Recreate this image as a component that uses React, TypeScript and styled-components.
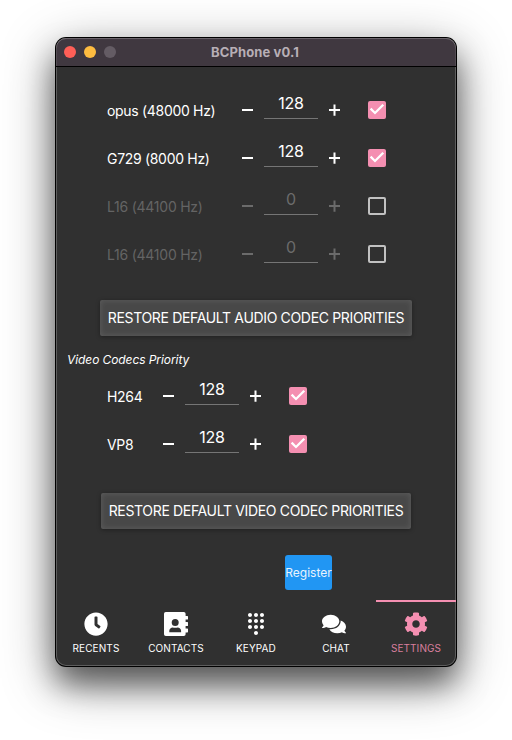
import React from "react";
import styled, { createGlobalStyle } from "styled-components";
import { FaClock, FaCog, FaComments } from "react-icons/fa";
import { MdDialpad } from "react-icons/md";

const PINK = "#f48fb1";

const GlobalStyle = createGlobalStyle`
  * { box-sizing: border-box; }
  html, body { margin: 0; background: #fff; }
  body { font-family: Inter, "Liberation Sans", sans-serif; color: #fff; }
  button { font-family: inherit; color: inherit; border: 0; margin: 0; padding: 0; background: none; }
`;

const Desktop = styled.div`
  width: 512px;
  height: 740px;
  padding: 38px 56px 0;
  overflow: hidden;
`;

const Window = styled.main`
  width: 400px;
  height: 628px;
  display: flex;
  flex-direction: column;
  background: #303030;
  border-radius: 10px;
  box-shadow:
    inset 0 0 0 1px rgba(255, 255, 255, 0.22),
    0 0 0 1px #000,
    0 18px 30px rgba(0, 0, 0, 0.5),
    0 14px 54px rgba(0, 0, 0, 0.42);
`;

const TitleBar = styled.header`
  height: 29px;
  display: grid;
  grid-template-columns: 60px 1fr 70px;
  align-items: center;
  padding-left: 8px;
  background: #403840;
  border-bottom: 1px solid #000;
  border-radius: 10px 10px 0 0;
  box-shadow: inset 0 1px 0 rgba(255, 255, 255, 0.22), inset 1px 0 0 rgba(255, 255, 255, 0.1), inset -1px 0 0 rgba(255, 255, 255, 0.1);
`;

const Lights = styled.div`
  display: flex;
  gap: 8px;
`;

const Light = styled.span<{ $color: string }>`
  width: 12px;
  height: 12px;
  border-radius: 50%;
  background: ${(p) => p.$color};
`;

const Title = styled.h1`
  margin: 0;
  text-align: center;
  font-size: 13px;
  line-height: 16px;
  font-weight: 700;
  color: #b8afb6;
  letter-spacing: 0.13px;
  padding-bottom: 1px;
`;

const Content = styled.section`
  height: 533px;
  display: flex;
  flex-direction: column;
  padding-top: 19px;
`;

const CodecRow = styled.div<{ $labelWidth: number }>`
  height: 48px;
  display: grid;
  grid-template-columns: ${(p) => p.$labelWidth}px 11px 54px 11px 18px;
  column-gap: 11px;
  align-items: center;
  padding-left: 51px;
`;

const CodecName = styled.span<{ $dim: boolean }>`
  font-size: 14px;
  line-height: 18px;
  padding-top: 1px;
  letter-spacing: ${(p) => (p.$dim ? "-0.24px" : "-0.31px")};
  white-space: nowrap;
  color: ${(p) => (p.$dim ? "#646464" : "#fff")};
`;

const StepButton = styled.button<{ $dim: boolean }>`
  width: 11px;
  height: 12px;
  display: block;
  color: ${(p) => (p.$dim ? "#6b6b6b" : "#fff")};
  svg { display: block; }
`;

const Field = styled.div<{ $dim: boolean }>`
  height: 28px;
  align-self: start;
  margin-top: 5px;
  border-bottom: 1px solid #757575;
  text-align: center;
  font-size: 16px;
  line-height: 24px;
  letter-spacing: -0.15px;
  color: ${(p) => (p.$dim ? "#6b6b6b" : "#fff")};
`;

const Check = styled.button<{ $on: boolean }>`
  width: 18px;
  height: 18px;
  margin-left: 17px;
  border-radius: 2px;
  border: ${(p) => (p.$on ? "0" : "2px solid #c1c1c1")};
  background: ${(p) => (p.$on ? PINK : "transparent")};
  svg { display: block; }
`;

const Restore = styled.button<{ $width: number; $top: number }>`
  width: ${(p) => p.$width}px;
  height: 36px;
  flex: none;
  align-self: center;
  margin-top: ${(p) => p.$top}px;
  padding-bottom: 1px;
  border-radius: 2px;
  background: #484848;
  box-shadow: inset 0 0 6px rgba(255, 255, 255, 0.12), 0 1px 4px rgba(0, 0, 0, 0.35);
  font-size: 14px;
  letter-spacing: -0.34px;
  white-space: nowrap;
`;

const SectionLabel = styled.h2`
  margin: 15px 0 4px 11px;
  font-size: 12px;
  line-height: 17px;
  font-weight: 400;
  font-style: italic;
  letter-spacing: -0.08px;
`;

const Register = styled.button`
  width: 47px;
  height: 35px;
  flex: none;
  margin: 26px 0 0 229px;
  border-radius: 3px;
  background: #2196f3;
  font-size: 12px;
  letter-spacing: -0.02px;
  color: #e8f3fd;
`;

const TabBar = styled.nav`
  height: 66px;
  display: grid;
  grid-template-columns: repeat(5, 80px);
`;

const Tab = styled.button<{ $active: boolean }>`
  display: flex;
  flex-direction: column;
  align-items: center;
  padding-top: 10px;
  border-top: 2px solid ${(p) => (p.$active ? PINK : "transparent")};
  color: ${(p) => (p.$active ? PINK : "#fff")};
  svg { flex: none; }
`;

const TabLabel = styled.span<{ $active: boolean }>`
  margin-top: 5px;
  font-size: 10px;
  line-height: 14px;
  letter-spacing: 0.1px;
  color: ${(p) => (p.$active ? "#d97f9e" : "#fff")};
`;

const ChatIcon = styled(FaComments)`
  margin-right: 4px;
`;

const ContactBook = () => (
  <svg width="24" height="24" viewBox="0 0 24 24" fill="currentColor">
    <path
      fillRule="evenodd"
      d="M0 1.8A1.8 1.8 0 0 1 1.8 0H19.8a1.8 1.8 0 0 1 1.8 1.8V4H23.4q.6 0 .6.6V7q0 .6-.6.6H21.6V10H23.4q.6 0 .6.6v2.8q0 .6-.6.6H21.6v2.4H23.4q.6 0 .6.6v2.8q0 .6-.6.6H21.6v1.8a1.8 1.8 0 0 1-1.8 1.8H1.8A1.8 1.8 0 0 1 0 22.2ZM11.2 7a3.5 3.5 0 1 0 0 7a3.5 3.5 0 0 0 0-7ZM5.3 20.2h11.8v-1.4c0-2-1.7-3.4-3.4-3.4-.7 0-1.4.3-2.5.3s-1.8-.3-2.5-.3c-1.7 0-3.4 1.4-3.4 3.4Z"
    />
  </svg>
);

interface Codec {
  name: string;
  value: number;
}

const audio: Codec[] = [
  { name: "opus (48000 Hz)", value: 128 },
  { name: "G729 (8000 Hz)", value: 128 },
  { name: "L16 (44100 Hz)", value: 0 },
  { name: "L16 (44100 Hz)", value: 0 },
];

const video: Codec[] = [
  { name: "H264", value: 128 },
  { name: "VP8", value: 128 },
];

const tabs = [
  { label: "RECENTS", icon: <FaClock size={24} /> },
  { label: "CONTACTS", icon: <ContactBook /> },
  { label: "KEYPAD", icon: <MdDialpad size={24} /> },
  { label: "CHAT", icon: <ChatIcon size={24} /> },
  { label: "SETTINGS", icon: <FaCog size={24} /> },
];

function Row({ codec, labelWidth }: { codec: Codec; labelWidth: number }) {
  const on = codec.value > 0;
  return (
    <CodecRow $labelWidth={labelWidth}>
      <CodecName $dim={!on}>{codec.name}</CodecName>
      <StepButton $dim={!on} aria-label="Decrease">
        <svg width="11" height="12" fill="currentColor">
          <path d="M0 5h11v2H0z" />
        </svg>
      </StepButton>
      <Field $dim={!on}>{codec.value}</Field>
      <StepButton $dim={!on} aria-label="Increase">
        <svg width="11" height="12" fill="currentColor">
          <path d="M0 5.1h4.5V.5h2v4.6H11V7H6.5v4.7h-2V7H0z" />
        </svg>
      </StepButton>
      <Check $on={on} aria-label="Enabled">
        {on && (
          <svg width="18" height="18" fill="#fff">
            <path d="M7 13.6 1.8 8.4l1.6-1.6L7 10.4l7.4-7.4L16.1 4.6z" />
          </svg>
        )}
      </Check>
    </CodecRow>
  );
}

export default function App() {
  return (
    <>
      <GlobalStyle />
      <Desktop>
        <Window>
          <TitleBar>
            <Lights>
              <Light $color="#ff5f57" />
              <Light $color="#febc40" />
              <Light $color="#645c64" />
            </Lights>
            <Title>BCPhone v0.1</Title>
          </TitleBar>
          <Content>
            {audio.map((c, i) => (
              <Row key={i} codec={c} labelWidth={124} />
            ))}
            <Restore $width={312} $top={22}>RESTORE DEFAULT AUDIO CODEC PRIORITIES</Restore>
            <SectionLabel>Video Codecs Priority</SectionLabel>
            {video.map((c) => (
              <Row key={c.name} codec={c} labelWidth={45} />
            ))}
            <Restore $width={310} $top={25}>RESTORE DEFAULT VIDEO CODEC PRIORITIES</Restore>
            <Register>Register</Register>
          </Content>
          <TabBar>
            {tabs.map((t) => {
              const active = t.label === "SETTINGS";
              return (
                <Tab key={t.label} $active={active}>
                  {t.icon}
                  <TabLabel $active={active}>{t.label}</TabLabel>
                </Tab>
              );
            })}
          </TabBar>
        </Window>
      </Desktop>
    </>
  );
}
